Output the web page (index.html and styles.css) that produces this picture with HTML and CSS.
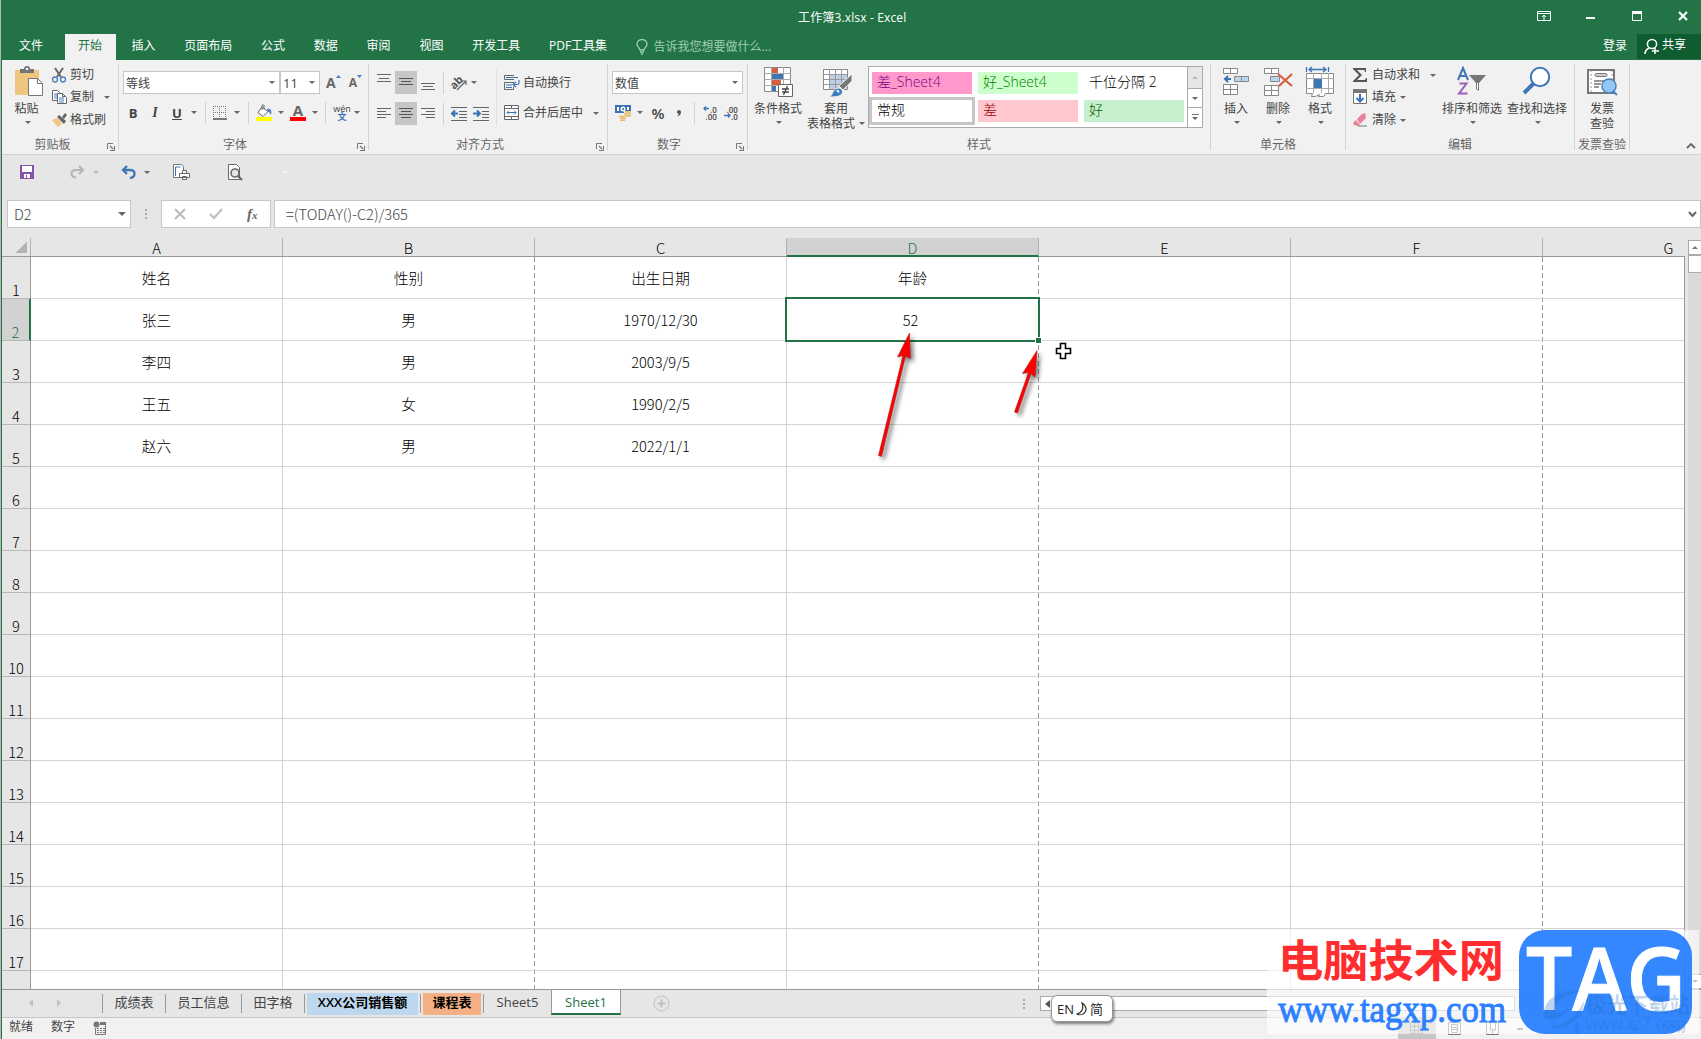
FILE: index.html
```
<!DOCTYPE html>
<html lang="zh-CN">

<head>
    <meta charset="UTF-8">
    <title>工作簿3.xlsx - Excel</title>
    <link rel="stylesheet" href="styles.css">
</head>

<body>
    <div class="app">
        <!-- Title bar -->
        <header class="title-bar">
            <div class="title">工作簿3.xlsx - Excel</div>
            <div class="window-buttons">
                <svg width="14" height="12" viewBox="0 0 14 12" fill="none" stroke="#fff"><path d="M.5 1.500h13v9h-13zM1 3.500h12M7 10V5M5 7l2-2 2 2"/></svg>
                <svg width="14" height="12" viewBox="0 0 14 12"><path d="M3 7h9v2H3z" fill="#fff"/></svg>
                <svg width="14" height="12" viewBox="0 0 14 12"><path d="M2.500 1.500h9v9h-9z" fill="none" stroke="#fff"/><path d="M2 1h10v3H2z" fill="#fff"/></svg>
                <svg width="14" height="12" viewBox="0 0 14 12"><path d="M3 2l8 8M11 2l-8 8" stroke="#fff" stroke-width="2.200"/></svg>
            </div>
        </header>

        <nav class="tabs">
            <span class="tab file">文件</span>
            <span class="tab active">开始</span>
            <span class="tab">插入</span>
            <span class="tab">页面布局</span>
            <span class="tab">公式</span>
            <span class="tab">数据</span>
            <span class="tab">审阅</span>
            <span class="tab">视图</span>
            <span class="tab">开发工具</span>
            <span class="tab pdf">PDF工具集</span>
            <span class="tell-me">
                <svg width="12" height="16" viewBox="0 0 12 16" fill="none" stroke="#a0cdb2" stroke-width="1.300"><path d="M4 11c0-2-3-3-3-6a5 4.500 0 0 1 10 0c0 3-3 4-3 6zM4 13h4M5 15h2"/></svg>
                告诉我您想要做什么...
            </span>
            <span class="login">登录</span>
            <span class="share">
                <svg width="16" height="17" viewBox="0 0 16 17" fill="none" stroke="#fff" stroke-width="1.500"><circle cx="8" cy="6" r="4.600"/><path d="M1 16c0-3 2-5 4-6M11 10v6M8 13h7"/></svg>
                共享
            </span>
        </nav>

        <!-- Ribbon -->
        <section class="ribbon">
            <div class="group clipboard">
                <div class="group-body">
                    <div class="big paste">
                        <svg width="30" height="32" viewBox="0 0 30 32"><path d="M1 4h24v25H1z" fill="#eec67d"/><path d="M6 7V3h4a3 3 0 0 1 6 0h4v4z" fill="#737373"/><circle cx="13" cy="3" r="1.300" fill="#f1f1f1"/><path d="M14.500 12.500h9l5 5v12h-14z" fill="#fff" stroke="#777"/><path d="M23.500 12.500v5h5" fill="none" stroke="#777"/></svg>
                        <span>粘贴</span>
                        <i class="caret"></i>
                    </div>
                    <div class="small-list">
                        <div class="small">
                            <svg width="16" height="16" viewBox="0 0 16 16" fill="none"><path d="M4 1l6 9M12 1L6 10" stroke="#666" stroke-width="2"/><circle cx="4" cy="12.500" r="2.500" stroke="#4a7ebb" stroke-width="1.300"/><circle cx="12" cy="12.500" r="2.500" stroke="#4a7ebb" stroke-width="1.300"/></svg>
                            <span>剪切</span>
                        </div>
                        <div class="small">
                            <svg width="16" height="16" viewBox="0 0 16 16" fill="#fff" stroke="#666"><path d="M1.500 1.500h5l2 2v8h-7z"/><path d="M3 5h3M3 7h3M3 9h3" stroke="#4a7ebb"/><path d="M6.500 4.500h5l4 4v6h-9z"/><path d="M11.500 4.500v3h3" fill="none"/><path d="M8 9h5M8 11h5M8 13h5" stroke="#4a7ebb"/></svg>
                            <span>复制</span>
                            <i class="caret far"></i>
                        </div>
                        <div class="small">
                            <svg width="16" height="16" viewBox="0 0 16 16"><path d="M1 8l5-2 5 5-3 4-2-1z" fill="#eec67d"/><path d="M6 5l2-2 7 6-2 3zM11 5l3-4 2 2-3 4z" fill="#666"/></svg>
                            <span>格式刷</span>
                        </div>
                    </div>
                </div>
                <div class="group-name">剪贴板<svg class="launcher" width="8" height="8" viewBox="0 0 8 8"><path d="M.5 6V.5H6" fill="none" stroke="#777"/><path d="M3 3l3 3M7.500 3v4.500H3" fill="none" stroke="#777" stroke-width="1.200"/></svg></div>
            </div>

            <div class="group font">
                <div class="group-body rows">
                    <div class="font-pick">
                        <div class="combo font-name">等线<i class="caret"></i></div>
                        <div class="combo font-size">11<i class="caret"></i></div>
                        <span class="grow">A<svg width="5" height="3" viewBox="0 0 5 3"><path d="M0 3l2.500-3L5 3z" fill="#4a7ebb"/></svg></span>
                        <span class="shrink">A<svg width="5" height="3" viewBox="0 0 5 3"><path d="M0 0h5L2.500 3z" fill="#4a7ebb"/></svg></span>
                    </div>
                    <div class="font-tools">
                        <b>B</b>
                        <em>I</em>
                        <u>U</u>
                        <i class="caret"></i>
                        <i class="line"></i>
                        <svg width="14" height="14" viewBox="0 0 14 14" stroke="#777" fill="none"><path d="M.5 0v13M6.500 0v13M12.500 0v13M0 .5h13M0 6.500h13" stroke-dasharray="1 1"/><path d="M0 13h14" stroke-width="2"/></svg>
                        <i class="caret"></i>
                        <i class="line"></i>
                        <svg width="16" height="17" viewBox="0 0 16 17"><path d="M6 3l6 4.500-5 5-5-4z" fill="#fff" stroke="#666"/><path d="M6 6V1.500c0-1 2-1 2 0V5" fill="none" stroke="#666"/><path d="M11 5c4-1 5 2 4 6-1-1-1-3-3-3z" fill="#4a7ebb"/><path d="M0 13h16v4H0z" fill="#ff0"/></svg>
                        <i class="caret"></i>
                        <span class="color-a">A</span>
                        <i class="caret"></i>
                        <i class="line"></i>
                        <span class="phonetic"><span>wén</span><span class="wen">文</span></span>
                        <i class="caret"></i>
                    </div>
                </div>
                <div class="group-name">字体<svg class="launcher" width="8" height="8" viewBox="0 0 8 8"><path d="M.5 6V.5H6" fill="none" stroke="#777"/><path d="M3 3l3 3M7.500 3v4.500H3" fill="none" stroke="#777" stroke-width="1.200"/></svg></div>
            </div>

            <div class="group align">
                <div class="group-body">
                    <div class="align-tools">
                        <svg width="22" height="23" viewBox="0 0 22 23" stroke="#666"><path d="M4 3.500h14M6 7.500h10M4 10.500h14"/></svg>
                        <svg class="pressed" width="22" height="23" viewBox="0 0 22 23" stroke="#555"><path d="M4 7.500h14M6 10.500h10M4 13.500h14"/></svg>
                        <svg width="22" height="23" viewBox="0 0 22 23" stroke="#666"><path d="M4 12.500h14M6 15.500h10M4 18.500h14"/></svg>
                        <i class="line"></i>
                        <svg width="18" height="18" viewBox="0 0 18 18"><text x="0" y="12" transform="rotate(-45 7 9)" class="ab">ab</text><path d="M7 16l9-9M12 7h4v4" fill="none" stroke="#666" stroke-width="1.200"/></svg>
                        <i class="caret left"></i>
                        <svg width="22" height="23" viewBox="0 0 22 23" stroke="#666"><path d="M4 6.500h14M4 9.500h9M4 12.500h14M4 15.500h9"/></svg>
                        <svg class="pressed" width="22" height="23" viewBox="0 0 22 23" stroke="#555"><path d="M4 6.500h14M6 9.500h10M4 12.500h14M6 15.500h10"/></svg>
                        <svg width="22" height="23" viewBox="0 0 22 23" stroke="#666"><path d="M4 6.500h14M9 9.500h9M4 12.500h14M9 15.500h9"/></svg>
                        <i class="line"></i>
                        <svg width="16" height="14" viewBox="0 0 16 14" stroke="#666"><path d="M0 .5h16M8 4.500h8M8 7.500h8M8 10.500h8M0 13.500h16"/><path d="M7 6.500H1M4 3.500l-3 3 3 3" fill="none" stroke="#3a74b4" stroke-width="2"/></svg>
                        <svg width="16" height="14" viewBox="0 0 16 14" stroke="#666"><path d="M0 .5h16M9 4.500h7M9 7.500h7M9 10.500h7M0 13.500h16"/><path d="M0 6.500h6M4 3.500l3 3-3 3" fill="none" stroke="#3a74b4" stroke-width="2"/></svg>
                    </div>
                    <div class="wrap-tools">
                        <div class="small">
                            <svg width="16" height="16" viewBox="0 0 16 16" fill="none" stroke="#666"><path d="M10 4.500H.5v-4H10M10 7.500H.5v7h9v-3"/><path d="M2 2.500h12M2 10h6M2 12.500h6M15 5v3c0 1-1 1.500-2 1.500h-3M12 7l-3 2.500 3 2.500" stroke="#3a74b4" stroke-width="1.200"/></svg>
                            <span>自动换行</span>
                        </div>
                        <div class="small">
                            <svg width="16" height="16" viewBox="0 0 16 16" fill="#fff" stroke="#666"><path d="M.5.5h14v14H.5zM0 3.500h15M0 11.500h15M7.500 0v3.500M7.500 11.500V15"/><path d="M3 7.500h9M5 5.500l-2 2 2 2M10 5.500l2 2-2 2" fill="none" stroke="#3a74b4"/></svg>
                            <span>合并后居中</span>
                            <i class="caret far"></i>
                        </div>
                    </div>
                </div>
                <div class="group-name">对齐方式<svg class="launcher" width="8" height="8" viewBox="0 0 8 8"><path d="M.5 6V.5H6" fill="none" stroke="#777"/><path d="M3 3l3 3M7.500 3v4.500H3" fill="none" stroke="#777" stroke-width="1.200"/></svg></div>
            </div>

            <div class="group number">
                <div class="group-body rows">
                    <div class="combo number-format">数值<i class="caret"></i></div>
                    <div class="number-tools">
                        <svg width="16" height="17" viewBox="0 0 16 17"><path d="M0 1h16v8H0z" fill="#3a74b4"/><path d="M2 3h2v4H2zM12 3h2v3h-2z" fill="#fff"/><circle cx="8" cy="5" r="2.500" fill="#fff"/><path d="M8 4h1v2H7z" fill="#3a74b4"/><path d="M9 7h7v6H9zM4 11h7v6H4z" fill="#f1f1f1"/><path d="M10 8h6M9 10h7M10 12h6M4 12.500h6M5 14.500h6M5 16.500h5" stroke="#e9b964" stroke-width="1.300"/></svg>
                        <i class="caret"></i>
                        <span class="percent">%</span>
                        <svg width="6" height="8" viewBox="0 0 6 8"><path d="M1 3a2 2 0 1 1 4 0c0 2-1 4-4 4.500 1-1 2-2 1.500-3C1.500 4.500 1 4 1 3z" fill="#555"/></svg>
                        <i class="line"></i>
                        <span class="decimals"><span><svg width="7" height="5" viewBox="0 0 7 5"><path d="M6 2.500H1M3 .5l-2 2 2 2" fill="none" stroke="#3a74b4" stroke-width="1.300"/></svg>.0</span><span>.00</span></span>
                        <span class="decimals"><span>.00</span><span><svg width="7" height="5" viewBox="0 0 7 5"><path d="M0 2.500h5M4 .5l2 2-2 2" fill="none" stroke="#3a74b4" stroke-width="1.300"/></svg>.0</span></span>
                    </div>
                </div>
                <div class="group-name">数字<svg class="launcher" width="8" height="8" viewBox="0 0 8 8"><path d="M.5 6V.5H6" fill="none" stroke="#777"/><path d="M3 3l3 3M7.500 3v4.500H3" fill="none" stroke="#777" stroke-width="1.200"/></svg></div>
            </div>

            <div class="group styles">
                <div class="group-body">
                    <div class="big cond">
                        <svg width="32" height="32" viewBox="0 0 32 32"><path d="M2.500 1.500h26v24h-26z" fill="#fff" stroke="#888"/><path d="M2 7.500h27M2 13.500h27M2 19.500h27M9.500 1v25M21.500 1v25" stroke="#aaa"/><path d="M10 2h6v5h-6zM10 14h9v5h-9z" fill="#d85f3e"/><path d="M10 8h11v5H10zM10 20h4v5h-4z" fill="#3f76b5"/><path d="M16.500 18.500h14v12h-14z" fill="#fff" stroke="#666"/><path d="M20 23h7M20 26h7M25.500 20l-4 9" stroke="#444" stroke-width="1.300"/></svg>
                        <span>条件格式</span>
                        <i class="caret"></i>
                    </div>
                    <div class="big table-format">
                        <svg width="32" height="32" viewBox="0 0 32 32"><path d="M3.500 3.500h24v20h-24z" fill="#fff" stroke="#888"/><path d="M10 9h17v14H10z" fill="#bdd0e9"/><path d="M3 8.500h25M3 13.500h25M3 18.500h25M9.500 3v21M15.500 3v21M21.500 3v21" stroke="#999"/><path d="M32 8v7l-9 9-4-4z" fill="#777" stroke="#f1f1f1"/><path d="M9 31c4-1 3-8 9-9 4 0 6 4 3 7-3 2-8 2-12 2z" fill="#3f7cbf" stroke="#f1f1f1"/><path d="M16 25c2-2 4-1 3 2" fill="#fff"/></svg>
                        <span>套用</span>
                        <span class="two">表格格式<i class="caret"></i></span>
                    </div>
                    <div class="gallery">
                        <div class="gallery-cells">
                            <span class="style bad-sheet">差_Sheet4</span>
                            <span class="style good-sheet">好_Sheet4</span>
                            <span class="style">千位分隔 2</span>
                            <span class="style normal">常规</span>
                            <span class="style bad">差</span>
                            <span class="style good">好</span>
                        </div>
                        <div class="gallery-scroll">
                            <span class="off"><i class="caret up"></i></span>
                            <span><i class="caret"></i></span>
                            <span class="more"><i class="caret"></i></span>
                        </div>
                    </div>
                </div>
                <div class="group-name">样式</div>
            </div>

            <div class="group cells">
                <div class="group-body">
                    <div class="big">
                        <svg width="30" height="32" viewBox="0 0 30 32" fill="#fff" stroke="#888"><path d="M2.500 2.500h14v5h-14zM9.500 2.500v5M2.500 18.500h14v10h-14zM9.500 18.500v10M2.500 23.500h14"/><path d="M13.500 10.500h14v5h-14zM20.500 10.500v5" fill="#bdd5ea"/><path d="M10 13H4M7 10l-3 3 3 3" fill="none" stroke="#3a74b4" stroke-width="2"/></svg>
                        <span>插入</span>
                        <i class="caret"></i>
                    </div>
                    <div class="big">
                        <svg width="30" height="32" viewBox="0 0 30 32" fill="#fff" stroke="#888"><path d="M1.500 2.500h14v5h-14zM8.500 2.500v5M1.500 19.500h14v10h-14zM8.500 19.500v10M1.500 24.500h14"/><path d="M7.500 10.500h9v5h-9z" fill="#bdd5ea"/><path d="M15 8l14 12M29 8L16 20" fill="none" stroke="#d85f3e" stroke-width="2.200"/></svg>
                        <span>删除</span>
                        <i class="caret"></i>
                    </div>
                    <div class="big">
                        <svg width="30" height="32" viewBox="0 0 30 32" fill="#fff" stroke="#888"><path d="M1.500 7.500h27v20h-8l-2 3h-5l1-2-4 2h-4l1-3h-6z"/><path d="M1 12.500h28M1 22.500h28M8.500 7v20M16.500 7v20M23.500 7v20" stroke="#aaa"/><path d="M9 13h8v9H9z" fill="#3f76b5" stroke="none"/><path d="M1.500 1v5M23.500 1v5M4 3.500h17M7 1L4 3.500 7 6M18 1l3 2.500L18 6" fill="none" stroke="#3a74b4" stroke-width="1.300"/></svg>
                        <span>格式</span>
                        <i class="caret"></i>
                    </div>
                </div>
                <div class="group-name">单元格</div>
            </div>

            <div class="group edit">
                <div class="group-body">
                    <div class="small-list">
                        <div class="small">
                            <svg width="16" height="16" viewBox="0 0 16 16"><path d="M1 1h13v4h-1c0-2-1-2-2-2H5l5 5-5 5h6c1 0 3 0 3-2h1v4H1v-1l6-6-6-6z" fill="#555"/></svg>
                            <span>自动求和</span>
                            <i class="caret far"></i>
                        </div>
                        <div class="small">
                            <svg width="16" height="16" viewBox="0 0 16 16"><path d="M1.500.5h13v14h-13z" fill="#fff" stroke="#777"/><path d="M1 0h14v4H1z" fill="#777"/><path d="M8 5v8M4.500 9L8 12.500 11.500 9" fill="none" stroke="#3a74b4" stroke-width="2"/></svg>
                            <span>填充</span>
                            <i class="caret"></i>
                        </div>
                        <div class="small">
                            <svg width="16" height="16" viewBox="0 0 16 16"><path d="M5 7l5-5 3-1 1 5-6 6z" fill="#e8849a"/><path d="M4 8l4 5-2 1-4-1-1-2z" fill="#e8849a"/><path d="M6 14h9" stroke="#777"/></svg>
                            <span>清除</span>
                            <i class="caret"></i>
                        </div>
                    </div>
                    <div class="big sort">
                        <svg width="32" height="32" viewBox="0 0 32 32"><path d="M2 14L7 2l5 12M4 10h6" fill="none" stroke="#3f76b5" stroke-width="2"/><path d="M3.500 17.500h7L3 27.500h8.500" fill="none" stroke="#9a5fb5" stroke-width="2"/><path d="M13 9h17l-7 8v8l-3-2v-6z" fill="#777"/><path d="M21 17h1v6h-1z" fill="#fff"/></svg>
                        <span>排序和筛选</span>
                        <i class="caret"></i>
                    </div>
                    <div class="big find">
                        <svg width="30" height="32" viewBox="0 0 30 32"><path d="M2 27l10-10" stroke="#3f76b5" stroke-width="4"/><circle cx="18" cy="11" r="9.200" fill="#fff" stroke="#3f76b5" stroke-width="2"/></svg>
                        <span>查找和选择</span>
                        <i class="caret"></i>
                    </div>
                </div>
                <div class="group-name">编辑</div>
            </div>

            <div class="group invoice">
                <div class="group-body">
                    <div class="big">
                        <svg width="32" height="32" viewBox="0 0 32 32"><path d="M2 4h26v23H2z" fill="#fff" stroke="#777" stroke-width="2"/><path d="M5 4v23M26 4v13" stroke="#999" stroke-dasharray="2 2"/><rect x="9" y="7.500" width="12" height="3" rx="1.500" fill="#ccc" stroke="#777"/><path d="M8 15h10M8 18h7M8 21h5" stroke="#777" stroke-width="1.300"/><circle cx="23" cy="20" r="7" fill="#93c7f4" stroke="#4a86bd" stroke-width="1.500"/><path d="M27 25l4 4" stroke="#4a86bd" stroke-width="2"/></svg>
                        <span>发票</span>
                        <span class="two">查验</span>
                    </div>
                </div>
                <div class="group-name">发票查验</div>
            </div>
            <svg class="collapse" width="10" height="6" viewBox="0 0 10 6"><path d="M1 5l4-4 4 4" fill="none" stroke="#666" stroke-width="1.800"/></svg>
        </section>

        <!-- Quick access -->
        <div class="quick">
            <svg width="14" height="14" viewBox="0 0 14 14"><path d="M0 0h14v14H0z" fill="#8653a8"/><path d="M2 1h10v6H2zM4 9h6v4H7v-3H6v3H4z" fill="#fff"/></svg>
            <svg class="redo" width="15" height="14" viewBox="0 0 15 14" fill="none" stroke="#b4b4b4" stroke-width="2"><path d="M13 5H6C0 5 0 12 6 12.500M9 1l4 4-4 4"/></svg>
            <i class="caret dim"></i>
            <svg width="15" height="14" viewBox="0 0 15 14" fill="none" stroke="#3f76b5" stroke-width="2.300"><path d="M2 5h7c6 0 6 7 0 8M6 1L2 5l4 4"/></svg>
            <i class="caret"></i>
            <svg class="print" width="17" height="17" viewBox="0 0 17 17" fill="#fff" stroke="#777"><path d="M.5.5h8l2 2v11H.5z"/><path d="M2.500 12V3h5" fill="none" stroke="#3a74b4"/><path d="M9.500 6.500h4v3h-4zM6.500 9.500h10v4h-10zM9.500 12.500h4v3h-4z" stroke="#666"/></svg>
            <svg width="15" height="17" viewBox="0 0 15 17" fill="none" stroke="#666"><path d="M.5.5h8l3 3v12H.5z" fill="#fff"/><circle cx="7" cy="9" r="4" fill="#e6e6e6" stroke-width="1.600"/><path d="M10 12l4 4" stroke-width="2.200"/></svg>
            <i class="caret ghost"></i>
        </div>

        <!-- Formula bar -->
        <div class="formula-bar">
            <div class="name-box">D2<i class="caret big-caret"></i></div>
            <i class="dots"></i>
            <div class="fx-buttons">
                <svg width="12" height="12" viewBox="0 0 12 12"><path d="M1 1l10 10M11 1L1 11" stroke="#bbb" stroke-width="2"/></svg>
                <svg width="14" height="12" viewBox="0 0 14 12"><path d="M1 6l4 4 8-9" fill="none" stroke="#c2c2c2" stroke-width="2.400"/></svg>
                <span class="fx">f<small>x</small></span>
            </div>
            <div class="formula">=(TODAY()-C2)/365<svg width="9" height="7" viewBox="0 0 9 7"><path d="M1 1l3.500 4L8 1" fill="none" stroke="#666" stroke-width="2"/></svg></div>
        </div>

        <!-- Worksheet -->
        <main class="sheet">
            <div class="sheet-view">
                <div class="col-heads">
                    <span class="corner"></span>
                    <span>A</span><span>B</span><span>C</span><span class="selected">D</span><span>E</span><span>F</span><span class="cut">G</span>
                </div>
                <div class="sheet-rows">
                    <div class="row-heads" id="rowHeads"></div>
                    <div class="grid" id="grid"></div>
                </div>
                <div class="selection"><i></i></div>
            </div>
            <div class="v-scroll">
                <span class="button"><i class="caret up"></i></span>
                <span class="thumb"></span>
                <span class="button bottom"><i class="caret"></i></span>
            </div>
        </main>

        <div class="sheet-bar">
            <span class="sheet-nav"><i></i><i class="next"></i></span>
            <span class="sheet-tab w1">成绩表</span>
            <span class="sheet-tab w2">员工信息</span>
            <span class="sheet-tab w3">田字格</span>
            <span class="sheet-tab blue"><b>XXX公司销售额</b></span>
            <span class="sheet-tab orange"><b>课程表</b></span>
            <span class="sheet-tab w4">Sheet5</span>
            <span class="sheet-tab current">Sheet1</span>
            <svg class="add" width="17" height="17" viewBox="0 0 17 17" fill="none" stroke="#c0c0c0"><circle cx="8.500" cy="8.500" r="7.500"/><path d="M8.500 4.500v8M4.500 8.500h8" stroke-width="2"/></svg>
            <i class="dots"></i>
            <div class="h-scroll"><i></i></div>
        </div>

        <footer class="status">
            <span>就绪</span>
            <span>数字</span>
            <svg width="14" height="14" viewBox="0 0 14 14"><circle cx="3.500" cy="3.500" r="3" fill="#777"/><path d="M7 1h6v3H7z" fill="#777"/><path d="M2.500 7v6.500h10V4" fill="none" stroke="#777"/><path d="M4 7.500h8M4 9.500h8M4 11.500h8" stroke="#777" stroke-dasharray="2 1"/></svg>
            <div class="views">
                <span class="on"><svg width="13" height="12" viewBox="0 0 13 12" fill="none" stroke="#777"><path d="M.5.5h12v11H.5zM4.500 0v12M8.500 0v12M0 4.500h13M0 8.500h13"/></svg></span>
                <span><svg width="13" height="13" viewBox="0 0 13 13" fill="none" stroke="#777"><path d="M.5.5h12v12H.5zM3.500 2.500h6v8h-6zM4 5.500h5M4 7.500h5"/></svg></span>
                <span><svg width="13" height="13" viewBox="0 0 13 13" fill="none" stroke="#777"><path d="M.5.5h12v12H.5zM4.500 0v8h5V0M6.500 8v5"/></svg></span>
            </div>
            <div class="zoom"><span class="minus"></span><span class="track"><i></i></span><span class="plus">+</span><span>100%</span></div>
        </footer>

        <!-- Arrows and mouse pointer over the sheet -->
        <svg class="marks" width="220" height="150" viewBox="870 320 220 150">
            <g class="arrows">
                <path d="M878.500 455.500L903 355.500l-5.500 1.500L909.500 333l.8 25.500-4.800-2.500-24 100.500z"/>
                <path d="M1014.500 412l14-39.500-6 1L1037 350.500l-2 26.500-4-3.500-13.500 39.500z"/>
            </g>
            <path d="M1060.500 343.500h5v5h5v5h-5v5h-5v-5h-4v-5h4z" fill="#fff" stroke="#000" stroke-width="1.600"/>
        </svg>

        <div class="ime">EN<svg width="12" height="14" viewBox="0 0 12 14"><path d="M6 1c4 2 6 8 1 11-2 1-5 1-6 0 5-1 7-6 5-11z" fill="none" stroke="#333" stroke-width="1.200"/></svg>简</div>

        <svg class="watermark" width="432" height="104" viewBox="0 0 432 104">
            <rect class="panel" width="432" height="104"/>
            <rect class="badge" x="252" y="0" width="173" height="104" rx="26"/>
            <text class="site" x="11" y="47" textLength="226" lengthAdjust="spacingAndGlyphs">电脑技术网</text>
            <text class="url" x="11" y="92" textLength="228" lengthAdjust="spacingAndGlyphs">www.tagxp.com</text>
            <text class="tag" x="259" y="80" textLength="160" lengthAdjust="spacingAndGlyphs">TAG</text>
            <path class="swirl" d="M278 88c-4-18 12-28 36-27-14 3-25 8-26 18 0 6 8 5 13-2 0 8-13 15-23 11zM282 95c14 2 26-6 35-24 0 17-19 33-35 24z"/>
            <text class="ghost-name" x="319" y="82" textLength="104" lengthAdjust="spacingAndGlyphs">极光下载站</text>
            <text class="ghost-url" x="319" y="99" textLength="100" lengthAdjust="spacingAndGlyphs">www.xz7.com</text>
        </svg>
    </div>

    <script>
        const data = [
            ['姓名', '性别', '出生日期', '年龄'],
            ['张三', '男', '1970/12/30', '52'],
            ['李四', '男', '2003/9/5', ''],
            ['王五', '女', '1990/2/5', ''],
            ['赵六', '男', '2022/1/1', '']
        ];
        const rowHeads = document.getElementById('rowHeads');
        const grid = document.getElementById('grid');

        for (let r = 0; r < 18; r++) {
            const head = document.createElement('span');
            head.textContent = r < 17 ? r + 1 : '';
            if (r === 1) head.className = 'selected';
            rowHeads.appendChild(head);

            for (let c = 0; c < 7; c++) {
                const cell = document.createElement('span');
                cell.textContent = (data[r] && data[r][c]) || '';
                // page breaks after B, D and F
                if (c === 1 || c === 3 || c === 5) cell.className = 'break';
                if (r === 1 && c === 3) cell.classList.add('num');
                grid.appendChild(cell);
            }
        }
    </script>
</body>

</html>
```
FILE: styles.css
```
* {
    box-sizing: border-box;
    margin: 0;
    padding: 0;
}

body {
    width: 1701px;
    height: 1039px;
    overflow: hidden;
    background: #b8b8b8;
    font-family: "Open Sans", "Noto Sans CJK SC", sans-serif;
    font-size: 12px;
    color: #444;
}

svg {
    display: block;
    flex: none;
}

.app {
    position: relative;
    display: flex;
    flex-direction: column;
    height: 1039px;
    margin-left: 1px;
    border-left: 1px solid #217346;
    background: #e6e6e6;
    white-space: nowrap;
}

/* Title bar */
.title-bar {
    display: flex;
    height: 34px;
    padding-left: 796px;
    background: #227447;
    color: #fff;
}

.title {
    line-height: 36px;
    letter-spacing: .15px;
}

.window-buttons {
    display: flex;
    gap: 32.5px;
    margin-left: auto;
    padding: 10px 11px 0 0;
}

.tabs {
    display: flex;
    height: 26px;
    background: #227447;
    color: #fff;
    line-height: 24px;
}

.tab {
    padding: 0 14.4px;
}

.tab.file {
    width: 63px;
    padding-left: 17px;
}

.tab.active {
    width: 51px;
    margin-right: 1px;
    padding: 0 13px;
    background: #f1f1f1;
    color: #217346;
}

.tab.pdf {
    width: 86px;
}

.tell-me {
    display: flex;
    gap: 6px;
    padding-left: 15px;
    color: #a0cdb2;
    line-height: 26px;
}

.tell-me svg {
    margin-top: 5px;
}

.login {
    margin-left: auto;
    padding-right: 10px;
}

.share {
    display: flex;
    gap: 2px;
    width: 64px;
    height: 25px;
    padding-left: 7px;
    background: #0e5c2f;
    line-height: 22px;
}

.share svg {
    margin-top: 4px;
}

.caret {
    display: block;
    flex: none;
    width: 0;
    height: 0;
    border: 3px solid transparent;
    border-top: 3px solid #666;
    border-bottom: 0;
}

.caret.up {
    border-top: 0;
    border-bottom: 3px solid #777;
}

.caret.dim {
    border-top-color: #b8b8b8;
}

.caret.ghost {
    border-top-color: #f4f4f4;
}

/* Ribbon */
.ribbon {
    display: flex;
    height: 95px;
    padding-top: 4px;
    background: #f1f1f1;
    border-bottom: 1px solid #d2d2d2;
}

.group {
    height: 86px;
    border-right: 1px solid #d2d2d2;
}

.group-body {
    display: flex;
    height: 70px;
}

.group-body.rows {
    flex-direction: column;
    padding-top: 7px;
}

.group-name {
    display: flex;
    justify-content: center;
    position: relative;
    height: 16px;
    color: #666;
    line-height: 21px;
}

.launcher {
    position: absolute;
    right: 3px;
    top: 9px;
}

.clipboard {
    width: 117px;
}

.clipboard .group-name {
    padding-right: 15px;
}

.font {
    width: 250px;
}

.font .group-name {
    padding-right: 17px;
}

.align {
    width: 239px;
}

.align .group-name {
    padding-right: 16px;
}

.number {
    width: 140px;
}

.number .group-name {
    padding-right: 17px;
}

.styles {
    width: 463px;
}

.cells {
    width: 135px;
}

.edit {
    width: 229px;
}

.invoice {
    width: 55px;
}

.big {
    display: flex;
    flex-direction: column;
    align-items: center;
    width: 42px;
    padding-top: 2px;
}

.big span {
    height: 15px;
    line-height: 16px;
    margin-top: 3px;
}

.big .caret {
    margin: 5px 0 0 2px;
}

.big .two {
    display: flex;
    margin-top: 0;
}

.big .two .caret {
    margin: 6px -10px 0 4px;
}

.paste {
    width: 50px;
    padding-left: 3px;
}

.paste span {
    margin-right: 4px;
}

.paste .caret {
    margin-left: 0;
    margin-right: 1px;
}

.small-list {
    display: flex;
    flex-direction: column;
}

.clipboard .small-list {
    margin-left: -1px;
}

.small {
    display: flex;
    align-items: center;
    gap: 3px;
    height: 23px;
    line-height: 16px;
}

.small-list .small:first-child {
    height: 21px;
}

.small .far {
    margin-left: 7px;
}

.small .caret {
    margin-top: 1px;
}

.combo {
    display: flex;
    align-items: center;
    justify-content: space-between;
    height: 23px;
    padding: 0 4px 0 2px;
    background: #fff;
    border: 1px solid #c6c6c6;
}

.font-pick {
    display: flex;
    height: 23px;
    margin-left: 4px;
}

.font-name {
    width: 157px;
}

.font-size {
    width: 40px;
    font-size: 13px;
}

.grow,
.shrink {
    display: flex;
    margin-left: 6px;
    font: bold 14px/24px "Open Sans", sans-serif;
    color: #666;
}

.shrink {
    margin-left: 8px;
    font-size: 12px;
}

.grow svg,
.shrink svg {
    margin-top: 4px;
}

.font-tools {
    display: grid;
    grid-template-columns: 22px 22px 22px 12px 10px 20px 13px 10px 22px 11px 24px 9px 12px 22px 8px;
    align-items: center;
    justify-items: center;
    height: 23px;
    margin: 7px 0 0 3px;
    font-size: 13px;
}

.font-tools u {
    font-weight: bold;
}

.font-tools em {
    font: italic bold 14px "Liberation Serif", serif;
}

.line {
    width: 1px;
    height: 22px;
    background: #d2d2d2;
}

.color-a {
    width: 16px;
    height: 16px;
    border-bottom: 4px solid #f00;
    font-size: 15px;
    font-weight: bold;
    line-height: 11px;
    text-align: center;
    color: #666;
}

.phonetic {
    display: flex;
    flex-direction: column;
    align-items: center;
    font-size: 9px;
    line-height: 8px;
}

.phonetic .wen {
    font-weight: bold;
    color: #3a74b4;
}

.align-tools {
    display: grid;
    grid-template-columns: 22px 22px 22px 9px 22px 22px;
    grid-template-rows: 23px 23px;
    row-gap: 8px;
    align-items: center;
    justify-items: center;
    padding: 7px 4px 0 4px;
}

.caret.left {
    margin-right: 14px;
}

.pressed {
    background: #c6c6c6;
}

.ab {
    font: bold 11px "Open Sans", sans-serif;
    fill: #555;
}

.wrap-tools {
    height: 56px;
    margin-top: 6px;
    border-left: 1px solid #e0e0e0;
    padding: 1px 0 0 7px;
}

.wrap-tools .small + .small {
    margin-top: 7px;
}

.number-format {
    width: 131px;
    margin-left: 4px;
}

.number-tools {
    display: grid;
    grid-template-columns: 22px 12px 24px 18px 12px 20px 22px;
    align-items: center;
    justify-items: center;
    height: 23px;
    margin: 7px 0 0 4px;
}

.percent {
    font-size: 15px;
    font-weight: 600;
    line-height: 16px;
}

.decimals {
    display: flex;
    flex-direction: column;
    align-items: flex-end;
    font-size: 8px;
    font-weight: 600;
    line-height: 7px;
}

.decimals span {
    display: flex;
}

.cond {
    width: 60px;
}

.table-format {
    width: 60px;
    padding-right: 4px;
}

.table-format .two {
    margin-right: 10px;
}

.gallery {
    display: flex;
    width: 335px;
    height: 62px;
    margin-top: 2px;
    background: #fff;
    border: 1px solid #ababab;
}

.gallery-cells {
    display: grid;
    grid-template-columns: 100px 100px 100px;
    grid-template-rows: 22px 22px;
    gap: 6px;
    padding: 5px 3px;
}

.style {
    padding-left: 5px;
    font-size: 14px;
    font-weight: 300;
    line-height: 20px;
    color: #000;
}

.style.bad-sheet {
    background: #ff99cc;
    color: #800080;
}

.style.good-sheet {
    background: #ccffcc;
    color: #008000;
}

.style.normal {
    outline: 3px solid #c6c6c6;
}

.style.bad {
    background: #ffc7ce;
    color: #9c0006;
}

.style.good {
    background: #c6efce;
    color: #006100;
}

.gallery-scroll {
    flex: 1;
    border-left: 1px solid #ababab;
}

.gallery-scroll span {
    display: flex;
    align-items: center;
    justify-content: center;
    height: 19px;
    border-top: 1px solid #ababab;
}

.gallery-scroll .off {
    height: 21px;
    border-top: 0;
    background: #e6e6e6;
}

.gallery-scroll .off .caret {
    border-bottom-color: #b8b8b8;
}

.gallery-scroll .more {
    flex-direction: column;
    gap: 2px;
}

.gallery-scroll .more::before {
    content: "";
    width: 7px;
    height: 1px;
    background: #777;
}

.cells .group-body {
    padding-left: 4px;
}

.edit .small-list {
    width: 89px;
    padding-left: 6px;
}

.edit .small {
    gap: 4px;
}

.edit .small .caret {
    margin-left: 0;
}

.edit .small .far {
    margin-left: 6px;
}

.sort {
    flex: none;
    width: 74px;
}

.find {
    flex: none;
    width: 56px;
}

.invoice .big {
    width: 54px;
}

.invoice .group-name {
    width: 54px;
}

.collapse {
    margin: 79px 5px 0 auto;
}

/* Quick access toolbar */
.quick {
    display: flex;
    align-items: center;
    height: 34px;
    padding-left: 18px;
}

.quick .redo {
    margin-left: 36px;
}

.quick .caret {
    margin: 0 22px 0 8px;
}

.quick .print {
    margin: 0 38px 0 1px;
}

.quick .ghost {
    margin-left: 39px;
}

/* Formula bar */
.formula-bar {
    display: flex;
    height: 28px;
    margin-top: 11px;
    padding-left: 5px;
    font-family: "Noto Sans CJK SC", sans-serif;
    font-size: 14.67px;
    font-weight: 300;
    line-height: 24px;
}

.name-box {
    display: flex;
    align-items: center;
    justify-content: space-between;
    width: 124px;
    padding: 0 4px 0 6px;
    background: #fff;
    border: 1px solid #c6c6c6;
}

.big-caret {
    border-width: 4px 4px 0;
}

.dots {
    width: 2px;
    height: 10px;
    background: repeating-linear-gradient(#aaa 0 2px, transparent 2px 4px);
}

.formula-bar .dots {
    margin: 9px 14px 0;
}

.fx-buttons {
    display: flex;
    align-items: center;
    gap: 23px;
    width: 110px;
    padding-left: 12px;
    background: #fff;
    border: 1px solid #c6c6c6;
}

.fx {
    margin-left: 1px;
    font: italic bold 15px "Liberation Serif", serif;
    color: #666;
}

.fx small {
    font-size: 11px;
}

.formula {
    display: flex;
    flex: 1;
    align-items: center;
    justify-content: space-between;
    margin-left: 3px;
    padding: 0 3px 0 11px;
    background: #fff;
    border: 1px solid #c6c6c6;
}

/* Worksheet */
.sheet {
    display: flex;
    height: 753px;
    margin-top: 9px;
    border-bottom: 1px solid #999;
    font-family: "Noto Sans CJK SC", sans-serif;
    font-size: 14.67px;
    font-weight: 300;
    color: #000;
}

.sheet-view {
    position: relative;
    width: 1683px;
    height: 752px;
    overflow: hidden;
}

.col-heads {
    display: flex;
    height: 20px;
    padding-top: 1px;
    border-bottom: 1px solid #999;
}

.col-heads span {
    flex: none;
    width: 252px;
    height: 18px;
    border-right: 1px solid #b1b1b1;
    line-height: 19px;
    text-align: center;
}

.col-heads .corner {
    width: 29px;
    background: linear-gradient(135deg, transparent 50%, #b4b4b4 50%) 14px 4px / 11px 11px no-repeat;
}

.col-heads .selected {
    height: 19px;
    background: #d2d2d2;
    border-bottom: 2px solid #217346;
    color: #217346;
}

.sheet-rows {
    display: flex;
}

.row-heads {
    flex: none;
    width: 29px;
    border-right: 1px solid #999;
}

.row-heads span {
    display: block;
    height: 42px;
    padding-top: 23px;
    border-bottom: 1px solid #b8b8b8;
    line-height: 20px;
    text-align: center;
}

.row-heads .selected {
    margin-right: -1px;
    background: #d2d2d2;
    border-right: 2px solid #217346;
    color: #217346;
}

/* dashed page break lines run through the whole sheet */
.grid {
    display: grid;
    flex: none;
    grid-template-columns: repeat(7, 252px);
    grid-auto-rows: 42px;
    background:
        linear-gradient(#999 5px, transparent 5px) 503px 0 / 1px 8px repeat-y,
        linear-gradient(#999 5px, transparent 5px) 1007px 0 / 1px 8px repeat-y,
        linear-gradient(#999 5px, transparent 5px) 1511px 0 / 1px 8px repeat-y,
        #fff;
}

.grid span {
    border-right: 1px solid #d4d4d4;
    border-bottom: 1px solid #d4d4d4;
    line-height: 42px;
    text-align: center;
}

.grid .break {
    border-right: 0;
    padding-right: 1px;
}

.grid .num {
    padding-right: 5px;
}

.sheet-view::after {
    content: "";
    position: absolute;
    top: 19px;
    right: 0;
    bottom: 0;
    width: 1px;
    background: #999;
}

.selection {
    position: absolute;
    left: 783px;
    top: 60px;
    width: 255px;
    height: 45px;
    border: 2px solid #217346;
}

.selection i {
    position: absolute;
    right: -4px;
    bottom: -4px;
    width: 7px;
    height: 7px;
    background: #217346;
    border: 1px solid #fff;
}

.v-scroll {
    display: flex;
    flex-direction: column;
    width: 13px;
    margin: 3px 0 0 3px;
    background: #dadada;
}

.v-scroll span {
    height: 15px;
    background: #fff;
    border: 1px solid #ababab;
    border-right: 0;
}

.v-scroll .thumb {
    height: 18px;
}

.v-scroll .button {
    display: flex;
    align-items: center;
    justify-content: center;
}

.v-scroll .bottom {
    margin-top: auto;
}

/* Sheet tabs */
.sheet-bar {
    display: flex;
    height: 28px;
    border-bottom: 1px solid #c6c6c6;
    font-size: 13px;
}

.sheet-nav {
    display: flex;
    gap: 24px;
    width: 100px;
    padding: 9px 0 0 27px;
}

.sheet-nav i {
    border: 4px solid transparent;
    border-right-color: #c0c0c0;
    border-left: 0;
    height: 0;
}

.sheet-nav .next {
    border-left: 4px solid #c0c0c0;
    border-right: 0;
}

.sheet-tab {
    height: 19px;
    margin-top: 4px;
    border-left: 1px solid #999;
    line-height: 17px;
    text-align: center;
}

.sheet-tab.w1 {
    width: 63px;
}

.sheet-tab.w2 {
    width: 76px;
}

.sheet-tab.w3 {
    width: 63px;
}

.sheet-tab.w4 {
    width: 68px;
}

.sheet-tab b {
    display: block;
    height: 22px;
    margin: -1px 2px 0;
    background: #bdd7ee;
    color: #000;
    font-size: 13px;
    font-weight: 600;
    line-height: 19px;
}

.sheet-tab.blue {
    width: 116px;
}

.sheet-tab.orange {
    width: 63px;
}

.sheet-tab.orange b {
    background: #f4b084;
}

.sheet-tab.current {
    width: 70px;
    height: 25px;
    margin-top: 0;
    background: #fff;
    border: 1px solid #999;
    border-top: 0;
    border-bottom: 2px solid #217346;
    line-height: 25px;
    color: #217346;
}

.add {
    margin: 5px 0 0 32px;
}

.sheet-bar .dots {
    margin: 9px 0 0 353px;
}

.h-scroll {
    width: 475px;
    height: 15px;
    margin: 6px 0 0 15px;
    padding: 3px 0 0 4px;
    background: #fff;
    border: 1px solid #ababab;
}

.h-scroll i {
    display: block;
    width: 0;
    border: 4px solid transparent;
    border-right: 5px solid #555;
    border-left: 0;
}

.status {
    display: flex;
    height: 21px;
    padding-left: 7px;
    background: #f1f1f1;
    line-height: 18px;
}

.status > span {
    width: 42px;
}

.status > svg {
    margin-top: 3px;
}

.views {
    display: flex;
    margin-left: 1291px;
}

.views span {
    width: 38px;
    padding: 4px 12px 0;
}

.views .on {
    background: #c6c6c6;
}

.zoom {
    display: flex;
    align-items: center;
    margin-left: 5px;
    line-height: 20px;
}

.minus {
    width: 6px;
    height: 2px;
    background: #777;
}

.track {
    width: 94px;
    height: 1px;
    margin: 0 5px 0 8px;
    background: #aaa;
}

.track i {
    display: block;
    width: 4px;
    height: 11px;
    margin: -5px 0 0 44px;
    background: #555;
}

.plus {
    width: 18px;
    margin-right: 7px;
    font-size: 16px;
    font-weight: bold;
}

/* Overlays */
.marks {
    position: absolute;
    left: 868px;
    top: 320px;
}

.arrows {
    fill: #f00;
    stroke: #b01515;
    stroke-width: .6;
    filter: drop-shadow(3px 3px 2px rgba(0, 0, 0, .5));
}

.ime {
    position: absolute;
    left: 1049px;
    top: 995px;
    display: flex;
    align-items: center;
    gap: 2px;
    width: 62px;
    height: 27px;
    padding-left: 5px;
    background: #fff;
    border: 1px solid #999;
    border-radius: 6px;
    box-shadow: 1px 2px 3px rgba(0, 0, 0, .5);
    font-size: 13px;
    color: #222;
}

.watermark {
    position: absolute;
    left: 1265px;
    top: 930px;
}

.panel {
    fill: rgba(255, 255, 255, .62);
}

.badge {
    fill: #1976ff;
    fill-opacity: .88;
}

.site {
    font: bold 44px "Noto Sans CJK SC", sans-serif;
    fill: #ff2d2d;
}

.url {
    font: 37px "Liberation Serif", serif;
    fill: #2b80ff;
    stroke: #2b80ff;
    stroke-width: .9;
}

.tag {
    font: 600 86px "Open Sans", "Noto Sans", sans-serif;
    fill: #fff;
    stroke: #fff;
    stroke-width: 1;
}

.swirl,
.ghost-name,
.ghost-url {
    fill: #1c68c0;
    fill-opacity: .28;
}

.ghost-name {
    font: bold 21px "Noto Sans CJK SC", sans-serif;
}

.ghost-url {
    font: 17px "Open Sans", sans-serif;
}
```
